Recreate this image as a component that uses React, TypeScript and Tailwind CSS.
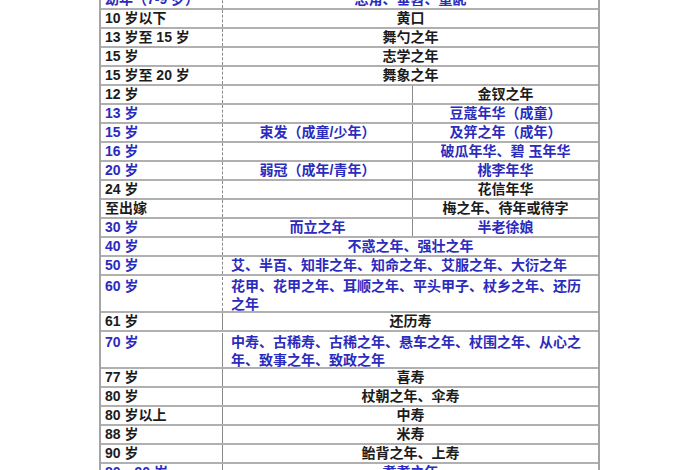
type Row = {
  age: string;
  mid?: string;
  right?: string;
  blue?: boolean;
  split?: boolean;
  left?: boolean;
  tall?: boolean;
  solid?: boolean;
};

const rows: Row[] = [
  { age: '幼年（7-9 岁）', mid: '总角、垂髫、童龀', blue: true },
  { age: '10 岁以下', mid: '黄口' },
  { age: '13 岁至 15 岁', mid: '舞勺之年' },
  { age: '15 岁', mid: '志学之年' },
  { age: '15 岁至 20 岁', mid: '舞象之年' },
  { age: '12 岁', split: true, right: '金钗之年' },
  { age: '13 岁', split: true, right: '豆蔻年华（成童）', blue: true },
  { age: '15 岁', split: true, mid: '束发（成童/少年）', right: '及笄之年（成年）', blue: true },
  { age: '16 岁', split: true, right: '破瓜年华、碧 玉年华', blue: true },
  { age: '20 岁', split: true, mid: '弱冠（成年/青年）', right: '桃李年华', blue: true },
  { age: '24 岁', split: true, right: '花信年华' },
  { age: '至出嫁', split: true, right: '梅之年、待年或待字' },
  { age: '30 岁', split: true, mid: '而立之年', right: '半老徐娘', blue: true },
  { age: '40 岁', mid: '不惑之年、强壮之年', blue: true },
  { age: '50 岁', mid: '艾、半百、知非之年、知命之年、艾服之年、大衍之年', blue: true, left: true },
  {
    age: '60 岁',
    mid: '花甲、花甲之年、耳顺之年、平头甲子、杖乡之年、还历之年',
    blue: true,
    left: true,
    tall: true,
  },
  { age: '61 岁', mid: '还历寿', solid: true },
  {
    age: '70 岁',
    mid: '中寿、古稀寿、古稀之年、悬车之年、杖围之年、从心之年、致事之年、致政之年',
    blue: true,
    left: true,
    tall: true,
    solid: true,
  },
  { age: '77 岁', mid: '喜寿', solid: true },
  { age: '80 岁', mid: '杖朝之年、伞寿', solid: true },
  { age: '80 岁以上', mid: '中寿', solid: true },
  { age: '88 岁', mid: '米寿', solid: true },
  { age: '90 岁', mid: '鲐背之年、上寿', solid: true },
  { age: '80～90 岁', mid: '耄耋之年', blue: true, solid: true },
];

export default function App() {
  return (
    <div className="h-[470px] w-[700px] overflow-hidden bg-white font-['Liberation_Sans','Noto_Sans_CJK_SC',sans-serif] text-[14px] font-semibold text-[#1c1c1c]">
      <div className="-mt-[9px] ml-[99px] w-[501px] border-x-2 border-[#a4a4a4]">
        {rows.map((r, i) => {
          const tone = r.blue ? 'text-[#2b2bbd]' : 'text-[#1c1c1c]';
          return (
            <div
              key={i}
              className={`flex border-b-2 border-[#b0b0b0] ${r.tall ? 'h-[37px] pt-px leading-[18px]' : 'h-[19px] leading-[17px]'} ${tone}`}
            >
              <div
                className={`w-[122px] shrink-0 border-r border-[#8a8a8a] pl-1 ${r.solid ? 'border-solid' : 'border-dashed'}`}
              >
                {r.age}
              </div>
              {r.split ? (
                <>
                  <div className="w-[190px] shrink-0 border-r border-[#8a8a8a] text-center">
                    {r.mid}
                  </div>
                  <div className="flex-1 text-center">{r.right}</div>
                </>
              ) : (
                <div className={`flex-1 ${r.left ? 'px-2 text-left' : 'text-center'}`}>
                  {r.mid}
                </div>
              )}
            </div>
          );
        })}
      </div>
    </div>
  );
}
